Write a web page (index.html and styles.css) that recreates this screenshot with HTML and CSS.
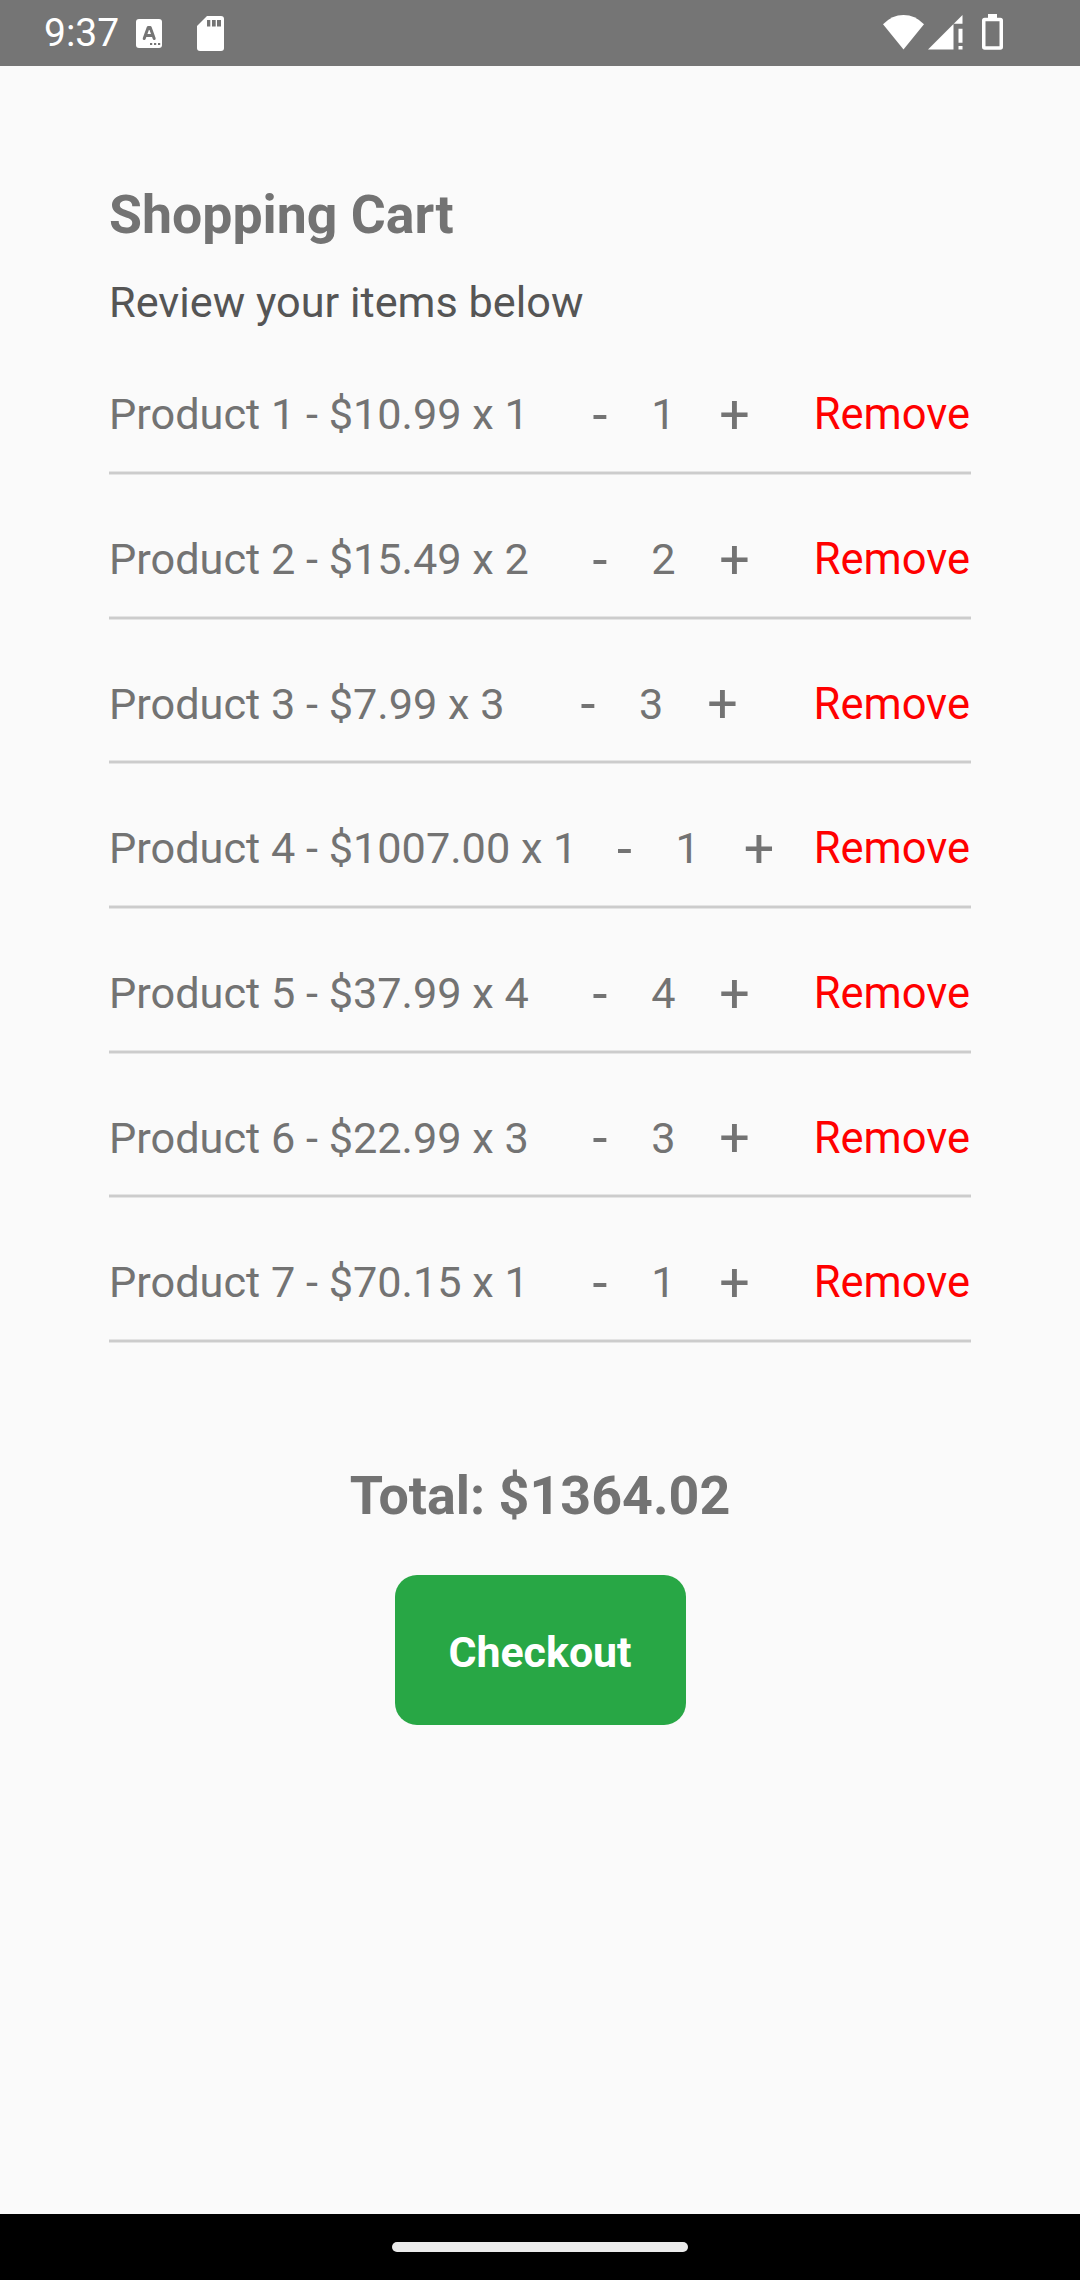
FILE: index.html
```html
<!DOCTYPE html>
<html lang="en">
<head>
<meta charset="utf-8">
<title>Shopping Cart</title>
<link rel="stylesheet" href="styles.css">
</head>
<body>
<header class="status">
  <span class="clock">9:37</span>
  <svg class="ic-key" width="26" height="30" viewBox="0 0 26 30"><rect width="26" height="29" rx="3" fill="#fff"/><path d="M8.200 19.500L12.200 8.500H14.200L18.200 19.500M9.500 16.500H17" fill="none" stroke="#757575" stroke-width="3" stroke-linecap="round" stroke-linejoin="round"/><path d="M14 24h2.200v2H14zM18 24h2.200v2H18zM22 24h2.200v2H22z" fill="#757575"/></svg>
  <svg class="ic-sd" width="27" height="35" viewBox="0 0 27 35"><path d="M10 0H24a3 3 0 0 1 3 3V32a3 3 0 0 1-3 3H3a3 3 0 0 1-3-3V10z" fill="#fff"/><path d="M10 4h3.300v6.500H10zM15 4h3.700v6.500H15zM20 4h4v6.500H20z" fill="#757575"/></svg>
  <span class="spacer"></span>
  <svg class="ic-wifi" width="41" height="35" viewBox="0 0 41 35"><path d="M0 9.300Q9 0 20.500 0T41 9.300L20.500 34.500z" fill="#fff"/></svg>
  <svg class="ic-cell" width="35" height="35" viewBox="0 0 35 35"><path d="M0 34.500L34.500 0V8.800H25.500V34.500zM30.500 13.800h4v14h-4zM30.500 31h4v3.500h-4z" fill="#fff"/></svg>
  <svg class="ic-bat" width="21" height="36" viewBox="0 0 21 36"><path d="M6 0h9v4h-9z" fill="#fff"/><rect x="1.750" y="5.500" width="17.500" height="28.500" rx="1" fill="none" stroke="#fff" stroke-width="3.500"/></svg>
</header>
<main class="cart">
  <h1 class="title">Shopping Cart</h1>
  <p class="subtitle">Review your items below</p>
  <ul class="items">
    <li class="item"><span>Product 1 - $10.99 x 1</span><div class="qty"><b class="step">-</b><span>1</span><b class="step">+</b></div><a class="remove">Remove</a></li>
    <li class="item"><span>Product 2 - $15.49 x 2</span><div class="qty"><b class="step">-</b><span>2</span><b class="step">+</b></div><a class="remove">Remove</a></li>
    <li class="item"><span>Product 3 - $7.99 x 3</span><div class="qty"><b class="step">-</b><span>3</span><b class="step">+</b></div><a class="remove">Remove</a></li>
    <li class="item"><span>Product 4 - $1007.00 x 1</span><div class="qty"><b class="step">-</b><span>1</span><b class="step">+</b></div><a class="remove">Remove</a></li>
    <li class="item"><span>Product 5 - $37.99 x 4</span><div class="qty"><b class="step">-</b><span>4</span><b class="step">+</b></div><a class="remove">Remove</a></li>
    <li class="item"><span>Product 6 - $22.99 x 3</span><div class="qty"><b class="step">-</b><span>3</span><b class="step">+</b></div><a class="remove">Remove</a></li>
    <li class="item"><span>Product 7 - $70.15 x 1</span><div class="qty"><b class="step">-</b><span>1</span><b class="step">+</b></div><a class="remove">Remove</a></li>
  </ul>
  <p class="total">Total: $1364.02</p>
  <button class="checkout">Checkout</button>
</main>
<footer class="navbar"><div class="handle"></div></footer>
</body>
</html>
```

FILE: styles.css
```css
* { box-sizing: border-box; }
body {
  margin: 0;
  width: 1080px;
  height: 2280px;
  display: flex;
  flex-direction: column;
  background: #fafafa;
  color: #737373;
  font-family: Roboto, sans-serif;
  font-size: 43.250px;
  overflow: hidden;
}
.status {
  height: 66px;
  padding-left: 44px;
  padding-right: 77px;
  display: flex;
  align-items: flex-start;
  background: #757575;
  color: #fff;
}
.clock { width: 92px; font-size: 39px; line-height: 66px; }
.ic-key { margin-top: 19px; }
.ic-sd { margin-top: 16px; margin-left: 35px; }
.spacer { flex: 1; }
.ic-wifi { margin-top: 15px; }
.ic-cell { margin-top: 15px; margin-left: 4px; }
.ic-bat { margin-top: 14px; margin-left: 19px; }
.cart {
  flex: 1;
  padding: 109px 109px 0;
  display: flex;
  flex-direction: column;
}
.title { margin: 8px 0 0; font-size: 53.600px; font-weight: 700; line-height: 64px; }
.subtitle { margin: 28px 0 0; color: #555; line-height: 56px; }
.items { margin: 3px 0 0; padding: 0; list-style: none; }
.item {
  height: 144.700px;
  padding-top: 17px;
  display: flex;
  justify-content: space-between;
  align-items: center;
  background: linear-gradient(#e4e4e4 0 1px, #ccc 1px 3px, #e4e4e4 3px 4px) 0 137px / 100% 4px no-repeat;
}
.qty { display: flex; align-items: center; gap: 43.800px; }
.step { font-size: 53.800px; font-weight: 400; line-height: 64px; }
.remove { color: #f00; padding-right: 1px; font-size: 43.500px; }
.total { margin: 116.700px 0 0; text-align: center; font-size: 53.800px; font-weight: 700; line-height: 64px; }
.checkout {
  align-self: center;
  width: 291px;
  height: 150px;
  margin-top: 47.400px;
  padding: 4px 0 0;
  border: 0;
  border-radius: 22px;
  background: #28a745;
  color: #fff;
  font: 700 42.900px Roboto, sans-serif;
}
.navbar {
  height: 66px;
  padding-top: 28px;
  background: #000;
}
.handle { width: 296px; height: 10px; margin: 0 auto; border-radius: 5px; background: #ebebeb; }
```
